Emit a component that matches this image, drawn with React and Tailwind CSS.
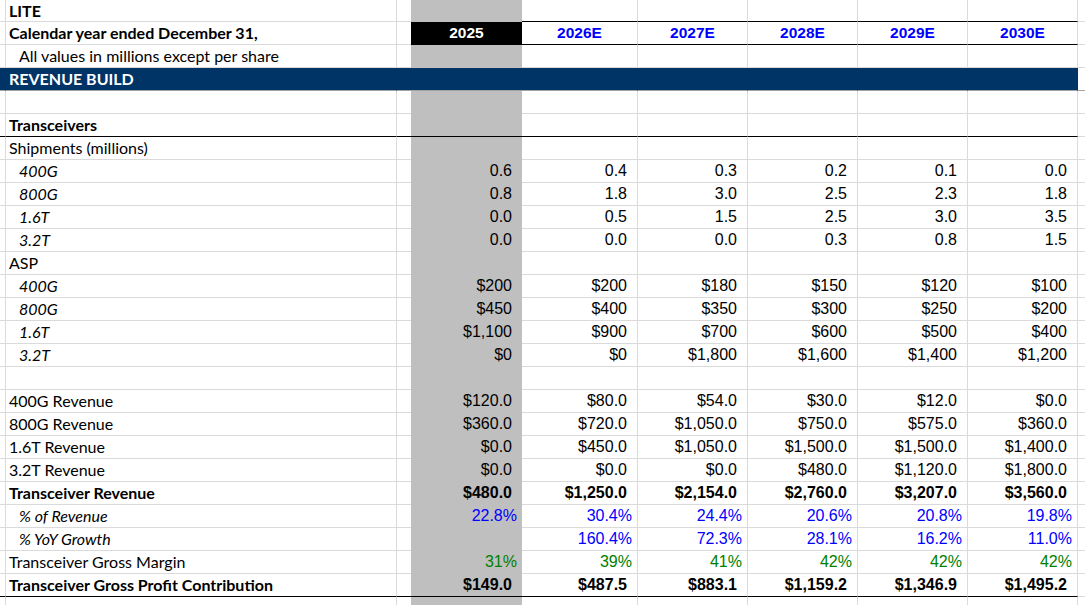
const LABEL_FONT = { fontFamily: 'Lato, "Open Sans", sans-serif' };

const rows = [
  { label: 'LITE', lab: 'font-bold', h: 'h-[22px]', capTop: true },
  { label: 'Calendar year ended December 31,', lab: 'font-bold', head: true },
  { label: 'All values in millions except per share', indent: true },
  { label: 'REVENUE BUILD', band: true },
  {},
  { label: 'Transceivers', lab: 'font-bold', line: 'black' },
  { label: 'Shipments (millions)' },
  { label: '400G', lab: 'italic', indent: true, vals: ['0.6', '0.4', '0.3', '0.2', '0.1', '0.0'] },
  { label: '800G', lab: 'italic', indent: true, vals: ['0.8', '1.8', '3.0', '2.5', '2.3', '1.8'] },
  { label: '1.6T', lab: 'italic', indent: true, vals: ['0.0', '0.5', '1.5', '2.5', '3.0', '3.5'] },
  { label: '3.2T', lab: 'italic', indent: true, vals: ['0.0', '0.0', '0.0', '0.3', '0.8', '1.5'] },
  { label: 'ASP' },
  { label: '400G', lab: 'italic', indent: true, vals: ['$200', '$200', '$180', '$150', '$120', '$100'] },
  { label: '800G', lab: 'italic', indent: true, vals: ['$450', '$400', '$350', '$300', '$250', '$200'] },
  { label: '1.6T', lab: 'italic', indent: true, vals: ['$1,100', '$900', '$700', '$600', '$500', '$400'] },
  { label: '3.2T', lab: 'italic', indent: true, vals: ['$0', '$0', '$1,800', '$1,600', '$1,400', '$1,200'] },
  {},
  { label: '400G Revenue', vals: ['$120.0', '$80.0', '$54.0', '$30.0', '$12.0', '$0.0'] },
  { label: '800G Revenue', vals: ['$360.0', '$720.0', '$1,050.0', '$750.0', '$575.0', '$360.0'] },
  { label: '1.6T Revenue', vals: ['$0.0', '$450.0', '$1,050.0', '$1,500.0', '$1,500.0', '$1,400.0'] },
  { label: '3.2T Revenue', vals: ['$0.0', '$0.0', '$0.0', '$480.0', '$1,120.0', '$1,800.0'] },
  {
    label: 'Transceiver Revenue',
    lab: 'font-bold',
    num: 'font-bold',
    vals: ['$480.0', '$1,250.0', '$2,154.0', '$2,760.0', '$3,207.0', '$3,560.0'],
  },
  {
    label: '% of Revenue',
    lab: 'italic',
    indent: true,
    pct: true,
    num: 'text-[#0000ff]',
    vals: ['22.8%', '30.4%', '24.4%', '20.6%', '20.8%', '19.8%'],
  },
  {
    label: '% YoY Growth',
    lab: 'italic',
    indent: true,
    pct: true,
    num: 'text-[#0000ff]',
    vals: ['', '160.4%', '72.3%', '28.1%', '16.2%', '11.0%'],
  },
  {
    label: 'Transceiver Gross Margin',
    pct: true,
    num: 'text-[#008000]',
    vals: ['31%', '39%', '41%', '42%', '42%', '42%'],
  },
  {
    label: 'Transceiver Gross Profit Contribution',
    lab: 'font-bold',
    num: 'font-bold',
    line: 'black',
    vals: ['$149.0', '$487.5', '$883.1', '$1,159.2', '$1,346.9', '$1,495.2'],
  },
  {},
];

const years = ['2026E', '2027E', '2028E', '2029E', '2030E'];
const yearWidths = ['w-[116px]', 'w-[110px]', 'w-[110px]', 'w-[110px]', 'w-[110px]'];

function Row({ label, lab = '', h = 'h-[23px]', indent, vals = [], num = '', pct, line, head, band, capTop }) {
  const bottom = band ? 'border-b-[#a3a3a3]' : line === 'black' ? 'border-b-black' : 'border-b-[#dadada]';
  const fill = band ? 'bg-[#003366]' : '';
  const right = band ? 'border-r-[#003366]' : 'border-r-[#dadada]';
  const numPad = pct ? 'pr-[5px]' : 'pr-[10px]';

  return (
    <div className={`flex ${h}`}>
      <div className={`w-[6px] shrink-0 border-r border-b ${right} ${bottom} ${fill}`} />
      <div
        className={`w-[391px] shrink-0 border-r border-b ${right} ${bottom} ${fill} flex items-center ${indent ? 'pl-[13px]' : 'pl-[3px]'} text-[16px] ${band ? 'text-white font-bold' : 'text-black'} ${lab} whitespace-nowrap`}
        style={LABEL_FONT}
      >
        {label}
      </div>
      <div className={`w-[14px] shrink-0 border-b ${bottom} ${fill}`} />
      <div
        className={`w-[111px] shrink-0 border-b flex items-center font-['Liberation_Sans',Arial,sans-serif] ${
          head
            ? 'bg-black border-b-black text-white font-bold justify-center text-[15.5px]'
            : band
              ? 'bg-[#003366] border-b-[#a3a3a3]'
              : line === 'black'
                ? 'bg-[#bfbfbf] border-b-black justify-end text-[16px]'
                : 'bg-[#bfbfbf] border-b-[#bfbfbf] justify-end text-[16px]'
        } ${head ? '' : numPad} ${num}`}
      >
        {head ? '2025' : vals[0]}
      </div>
      {years.map((y, i) => (
        <div
          key={y}
          className={`${yearWidths[i]} shrink-0 border-r border-b ${right} ${
            head || capTop ? 'border-b-black' : bottom
          } ${fill} flex items-center font-['Liberation_Sans',Arial,sans-serif] ${
            head
              ? 'justify-center font-bold text-[#0000ff] text-[15.5px]'
              : `justify-end text-[16px] ${numPad}`
          } ${num}`}
        >
          {head ? y : vals[i + 1]}
        </div>
      ))}
      <div className={`flex-1 border-b ${band ? 'border-b-[#a3a3a3]' : 'border-b-[#dadada]'}`} />
    </div>
  );
}

export default function App() {
  return (
    <div className="h-[605px] w-[1085px] overflow-hidden bg-white">
      {rows.map((r, i) => (
        <Row key={i} {...r} />
      ))}
    </div>
  );
}
